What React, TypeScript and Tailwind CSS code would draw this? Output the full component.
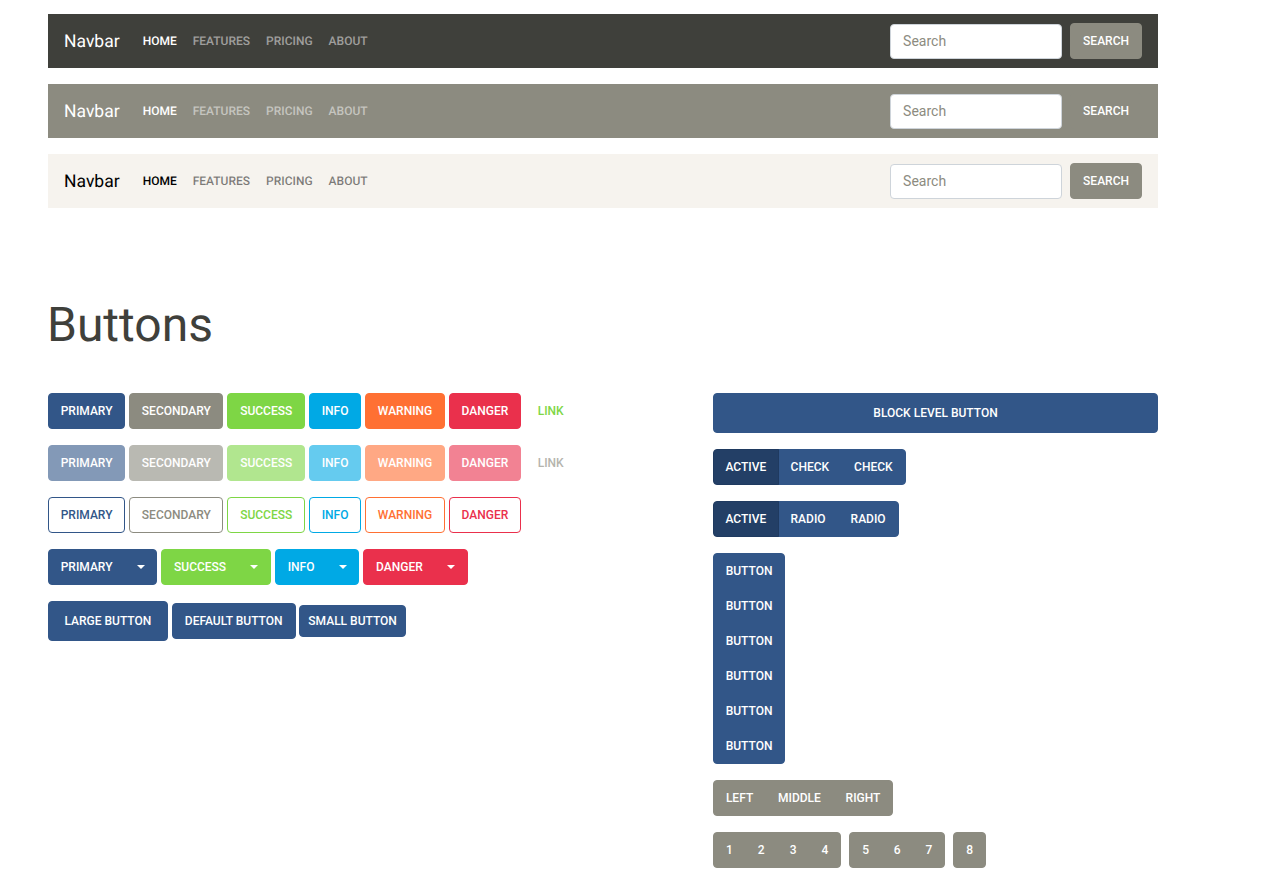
import React from "react";

const base =
  "inline-block border text-[12px] leading-[18px] font-medium uppercase text-center whitespace-nowrap";
const pad = "px-[11.7px] py-2";
const groupPad = "px-[11.9px] py-2";
const fullPad = "px-3 py-2";
const activePad = "px-[11.4px] py-2";
const md = `rounded ${pad}`;
const wide = "rounded px-3 py-2";
const lg = "rounded px-[15.5px] py-[10px]";
const sm = "rounded px-[8.4px] py-[6px] -ml-[0.6px]";

const solid: Record<string, string> = {
  primary: "bg-[#325688] border-[#325688] text-white",
  secondary: "bg-[#8c8b80] border-[#8c8b80] text-white",
  success: "bg-[#7ed645] border-[#7ed645] text-white",
  info: "bg-[#00a9e5] border-[#00a9e5] text-white",
  warning: "bg-[#ff7033] border-[#ff7033] text-white",
  danger: "bg-[#ea304c] border-[#ea304c] text-white",
};
const outline: Record<string, string> = {
  primary: "bg-white border-[#325688] text-[#325688]",
  secondary: "bg-white border-[#8c8b80] text-[#8c8b80]",
  success: "bg-white border-[#7ed645] text-[#7ed645]",
  info: "bg-white border-[#00a9e5] text-[#00a9e5]",
  warning: "bg-white border-[#ff7033] text-[#ff7033]",
  danger: "bg-white border-[#ea304c] text-[#ea304c]",
};
const activeColor = "relative bg-[#233f66] border-[#1f3a60] text-white";
const names = ["primary", "secondary", "success", "info", "warning", "danger"];

function Navbar({
  bg,
  brand,
  active,
  link,
}: {
  bg: string;
  brand: string;
  active: string;
  link: string;
}) {
  return (
    <nav className={`flex items-center justify-between h-[54px] px-4 ${bg}`}>
      <div className="flex items-center">
        <a className={`text-[17.5px] leading-[27px] pt-[2px] mr-[15px] ${brand}`}>Navbar</a>
        <ul className="flex items-center text-[12px] leading-[18px] font-medium uppercase">
          <li className={`px-2 ${active}`}>Home</li>
          <li className={`px-2 ${link}`}>Features</li>
          <li className={`px-2 ${link}`}>Pricing</li>
          <li className={`px-2 ${link}`}>About</li>
        </ul>
      </div>
      <form className="flex items-center">
        <input
          placeholder="Search"
          className="w-[172px] h-[35px] bg-white border border-[#ced4da] rounded px-3 text-[14px] outline-none placeholder:text-[#8c8b80]"
        />
        <button type="button" className={`${base} ${wide} ml-2 ${solid.secondary}`}>
          Search
        </button>
      </form>
    </nav>
  );
}

function Caret() {
  return (
    <span className="inline-block align-[2px] ml-[24.2px] w-0 h-0 border-x-[4px] border-x-transparent border-t-[4px] border-t-white" />
  );
}

function Group({
  items,
  color,
  activeFirst,
  padding = groupPad,
}: {
  items: string[];
  color: string;
  activeFirst?: boolean;
  padding?: string;
}) {
  return (
    <div className="inline-flex">
      {items.map((t, i) => {
        const isActive = activeFirst && i === 0;
        const left = i === 0 ? "rounded-l" : "-ml-px";
        const right = i === items.length - 1 ? "rounded-r" : "";
        return (
          <button
            key={i}
            type="button"
            className={`${base} ${isActive ? activePad : padding} ${left} ${right} ${isActive ? activeColor : color}`}
          >
            {t}
          </button>
        );
      })}
    </div>
  );
}

export default function App() {
  return (
    <div className="bg-white min-h-[888px] pt-[14px] pl-[48px] w-[1110px] box-content font-[Roboto,sans-serif] [text-rendering:geometricPrecision] text-[#3f403b]">
      <div className="flex flex-col gap-4">
        <Navbar bg="bg-[#3f403b]" brand="text-white" active="text-white" link="text-white/50" />
        <Navbar bg="bg-[#8c8b80]" brand="text-white" active="text-white" link="text-white/50" />
        <Navbar bg="bg-[#f6f3ee]" brand="text-black" active="text-black" link="text-black/50" />
      </div>

      <h1 className="mt-[88px] -ml-px text-[48px] leading-[58px] font-normal text-[#3f403b]">Buttons</h1>

      <div className="mt-[39px] grid grid-cols-[635px_445px] gap-x-[30px]">
        <div className="flex flex-col gap-4">
          <div className="flex gap-1">
            {names.map((n) => (
              <button key={n} type="button" className={`${base} ${md} ${solid[n]}`}>
                {n}
              </button>
            ))}
            <button type="button" className={`${base} ${md} bg-transparent border-transparent text-[#7ed645]`}>
              Link
            </button>
          </div>
          <div className="flex gap-1">
            {names.map((n) => (
              <button key={n} type="button" disabled className={`${base} ${md} opacity-60 ${solid[n]}`}>
                {n}
              </button>
            ))}
            <button type="button" disabled className={`${base} ${md} bg-transparent border-transparent text-[#b5b4ad]`}>
              Link
            </button>
          </div>
          <div className="flex gap-1">
            {names.map((n) => (
              <button key={n} type="button" className={`${base} ${md} ${outline[n]}`}>
                {n}
              </button>
            ))}
          </div>
          <div className="flex gap-1">
            {["primary", "success", "info", "danger"].map((n) => (
              <button key={n} type="button" className={`${base} ${md} ${solid[n]}`}>
                {n}
                <Caret />
              </button>
            ))}
          </div>
          <div className="flex items-center gap-1">
            <button type="button" className={`${base} ${lg} ${solid.primary}`}>
              Large button
            </button>
            <button type="button" className={`${base} ${wide} ${solid.primary}`}>
              Default button
            </button>
            <button type="button" className={`${base} ${sm} ${solid.primary}`}>
              Small button
            </button>
          </div>
        </div>

        <div className="flex flex-col items-start gap-4">
          <button type="button" className={`${base} ${lg} ${solid.primary} w-full`}>
            Block level button
          </button>
          <Group items={["Active", "Check", "Check"]} color={solid.primary} activeFirst padding={fullPad} />
          <Group items={["Active", "Radio", "Radio"]} color={solid.primary} activeFirst padding={fullPad} />
          <div className="inline-flex flex-col">
            {[0, 1, 2, 3, 4, 5].map((i) => (
              <button
                key={i}
                type="button"
                className={`${base} ${pad} ${solid.primary} ${i > 0 ? "-mt-px" : "rounded-t"} ${
                  i === 5 ? "rounded-b" : ""
                }`}
              >
                Button
              </button>
            ))}
          </div>
          <Group items={["Left", "Middle", "Right"]} color={solid.secondary} />
          <div className="flex gap-2">
            <Group items={["1", "2", "3", "4"]} color={solid.secondary} padding={fullPad} />
            <Group items={["5", "6", "7"]} color={solid.secondary} />
            <Group items={["8"]} color={solid.secondary} padding={fullPad} />
          </div>
        </div>
      </div>
    </div>
  );
}
